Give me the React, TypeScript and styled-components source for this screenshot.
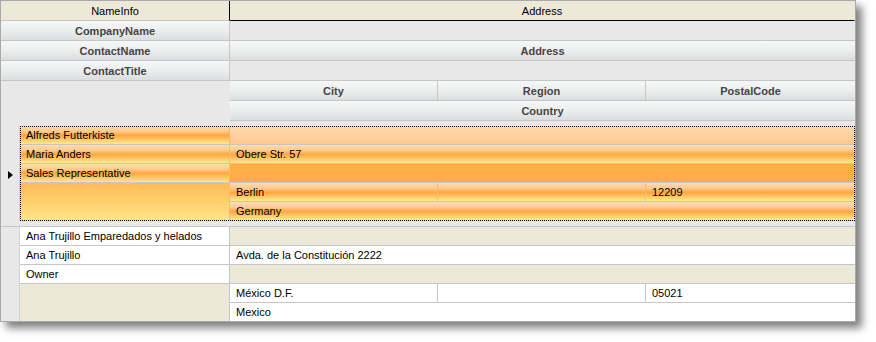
import React from 'react';
import styled, { createGlobalStyle, css } from 'styled-components';

const GlobalStyle = createGlobalStyle`
  html, body { margin: 0; padding: 0; background: #ffffff; }
  body { font-family: "Liberation Sans", Arial, sans-serif; font-size: 11px; }
  * { box-sizing: border-box; }
`;

const LINE = '#c6c6c6';

const Page = styled.div`
  padding: 0 20px 20px 0;
  min-height: 342px;
`;

const Grid = styled.div`
  width: 856px;
  border: 1px solid #a9a9a9;
  background: #e8e8e8;
  box-shadow: 6px 6px 8px rgba(0, 0, 0, 0.5);
  display: flex;
  flex-direction: column;
`;

const Header = styled.div`
  display: grid;
  grid-template-columns: 229px 208px 208px 209px;
  grid-template-rows: repeat(6, 20px);
`;

type Place = { $col: string; $row: string };

const Band = styled.div<Place & { $active?: boolean }>`
  grid-column: ${p => p.$col};
  grid-row: ${p => p.$row};
  background: #ece9d8;
  color: #000;
  display: flex;
  align-items: center;
  justify-content: center;
  border-bottom: 1px solid ${p => (p.$active ? '#000' : LINE)};
  border-right: 1px solid ${p => (p.$active ? 'transparent' : '#000')};
`;

const ColHead = styled.div<Place & { $noRight?: boolean }>`
  grid-column: ${p => p.$col};
  grid-row: ${p => p.$row};
  background: linear-gradient(to bottom, #f6f7f8 0%, #eceded 50%, #dcdddf 100%);
  color: #454545;
  font-weight: bold;
  display: flex;
  align-items: center;
  justify-content: center;
  border-bottom: 1px solid ${LINE};
  border-right: ${p => (p.$noRight ? 'none' : `1px solid ${LINE}`)};
`;

const HeadBlank = styled.div<Place & { $line?: boolean }>`
  grid-column: ${p => p.$col};
  grid-row: ${p => p.$row};
  background: #e8e8e8;
  border-bottom: ${p => (p.$line ? `1px solid ${LINE}` : 'none')};
`;

const Gap = styled.div<{ $line?: boolean }>`
  height: ${p => (p.$line ? 6 : 5)}px;
  background: #e8e8e8;
  border-bottom: ${p => (p.$line ? `1px solid ${LINE}` : 'none')};
`;

const Record = styled.div`
  display: flex;
`;

const Selector = styled.div<{ $rows: string }>`
  width: 19px;
  display: grid;
  grid-template-rows: ${p => p.$rows};
  background: #e8e8e8;
  border-right: 1px solid #d2d2d2;
`;

const Arrow = styled.div<{ $row: number }>`
  grid-row: ${p => p.$row};
  align-self: center;
  margin-left: 7px;
  margin-top: 2px;
  width: 0;
  height: 0;
  border-left: 5px solid #000;
  border-top: 4.5px solid transparent;
  border-bottom: 4.5px solid transparent;
`;

const Body = styled.div<{ $rows: string; $focused?: boolean }>`
  display: grid;
  grid-template-columns: 210px 208px 208px 209px;
  grid-template-rows: ${p => p.$rows};
  ${p =>
    p.$focused &&
    css`
      outline: 1px dotted #000;
      outline-offset: -1px;
    `}
`;

type Tone = 'sel' | 'selPeach' | 'selOrange' | 'selMerge' | 'white' | 'beige';

const tones: Record<Tone, string> = {
  sel: 'linear-gradient(to bottom, #ffdcb2 0%, #ffca8a 30%, #ffa641 52%, #ffcc6c 78%, #ffe992 100%)',
  selPeach: 'linear-gradient(to bottom, #ffd9aa 0%, #ffd09c 60%, #ffc88e 100%)',
  selOrange: '#ffad47',
  selMerge: 'linear-gradient(to bottom, #ffbb56 0%, #ffcf6c 50%, #ffe48a 100%)',
  white: '#ffffff',
  beige: '#ece9d8',
};

const Cell = styled.div<Place & { $tone: Tone; $noRight?: boolean; $noBottom?: boolean }>`
  grid-column: ${p => p.$col};
  grid-row: ${p => p.$row};
  background: ${p => tones[p.$tone]};
  color: #000;
  display: flex;
  align-items: center;
  padding-left: 6px;
  white-space: nowrap;
  overflow: hidden;
  border-right: ${p => (p.$noRight ? 'none' : `1px solid ${LINE}`)};
  border-bottom: ${p => (p.$noBottom ? 'none' : `1px solid ${LINE}`)};
`;

type Rec = {
  company: string;
  contact: string;
  title: string;
  address: string;
  city: string;
  region: string;
  postal: string;
  country: string;
};

const records: Rec[] = [
  {
    company: 'Alfreds Futterkiste',
    contact: 'Maria Anders',
    title: 'Sales Representative',
    address: 'Obere Str. 57',
    city: 'Berlin',
    region: '',
    postal: '12209',
    country: 'Germany',
  },
  {
    company: 'Ana Trujillo Emparedados y helados',
    contact: 'Ana Trujillo',
    title: 'Owner',
    address: 'Avda. de la Constitución 2222',
    city: 'México D.F.',
    region: '',
    postal: '05021',
    country: 'Mexico',
  },
];

function RecordView({ rec, selected }: { rec: Rec; selected: boolean }) {
  const rows = selected ? 'repeat(5, 19px)' : 'repeat(4, 19px) 18px';
  const text: Tone = selected ? 'sel' : 'white';
  const merge: Tone = selected ? 'selMerge' : 'beige';
  const blank1: Tone = selected ? 'selPeach' : 'beige';
  const blank3: Tone = selected ? 'selOrange' : 'beige';
  const last = !selected;
  return (
    <Record>
      <Selector $rows={rows}>{selected && <Arrow $row={3} />}</Selector>
      <Body $rows={rows} $focused={selected}>
        <Cell $col="1" $row="1" $tone={text}>{rec.company}</Cell>
        <Cell $col="2 / 5" $row="1" $tone={blank1} $noRight />
        <Cell $col="1" $row="2" $tone={text}>{rec.contact}</Cell>
        <Cell $col="2 / 5" $row="2" $tone={text} $noRight>{rec.address}</Cell>
        <Cell $col="1" $row="3" $tone={text}>{rec.title}</Cell>
        <Cell $col="2 / 5" $row="3" $tone={blank3} $noRight />
        <Cell $col="1" $row="4 / 6" $tone={merge} $noBottom={last} />
        <Cell $col="2" $row="4" $tone={text}>{rec.city}</Cell>
        <Cell $col="3" $row="4" $tone={text}>{rec.region}</Cell>
        <Cell $col="4" $row="4" $tone={text} $noRight>{rec.postal}</Cell>
        <Cell $col="2 / 5" $row="5" $tone={text} $noRight $noBottom={last}>{rec.country}</Cell>
      </Body>
    </Record>
  );
}

export default function App() {
  return (
    <Page>
      <GlobalStyle />
      <Grid>
        <Header>
          <Band $col="1" $row="1">NameInfo</Band>
          <Band $col="2 / 5" $row="1" $active>Address</Band>
          <ColHead $col="1" $row="2">CompanyName</ColHead>
          <HeadBlank $col="2 / 5" $row="2" $line />
          <ColHead $col="1" $row="3">ContactName</ColHead>
          <ColHead $col="2 / 5" $row="3" $noRight>Address</ColHead>
          <ColHead $col="1" $row="4">ContactTitle</ColHead>
          <HeadBlank $col="2 / 5" $row="4" $line />
          <HeadBlank $col="1" $row="5 / 7" />
          <ColHead $col="2" $row="5">City</ColHead>
          <ColHead $col="3" $row="5">Region</ColHead>
          <ColHead $col="4" $row="5" $noRight>PostalCode</ColHead>
          <ColHead $col="2 / 5" $row="6" $noRight>Country</ColHead>
        </Header>
        <Gap />
        <RecordView rec={records[0]} selected />
        <Gap $line />
        <RecordView rec={records[1]} selected={false} />
      </Grid>
    </Page>
  );
}
